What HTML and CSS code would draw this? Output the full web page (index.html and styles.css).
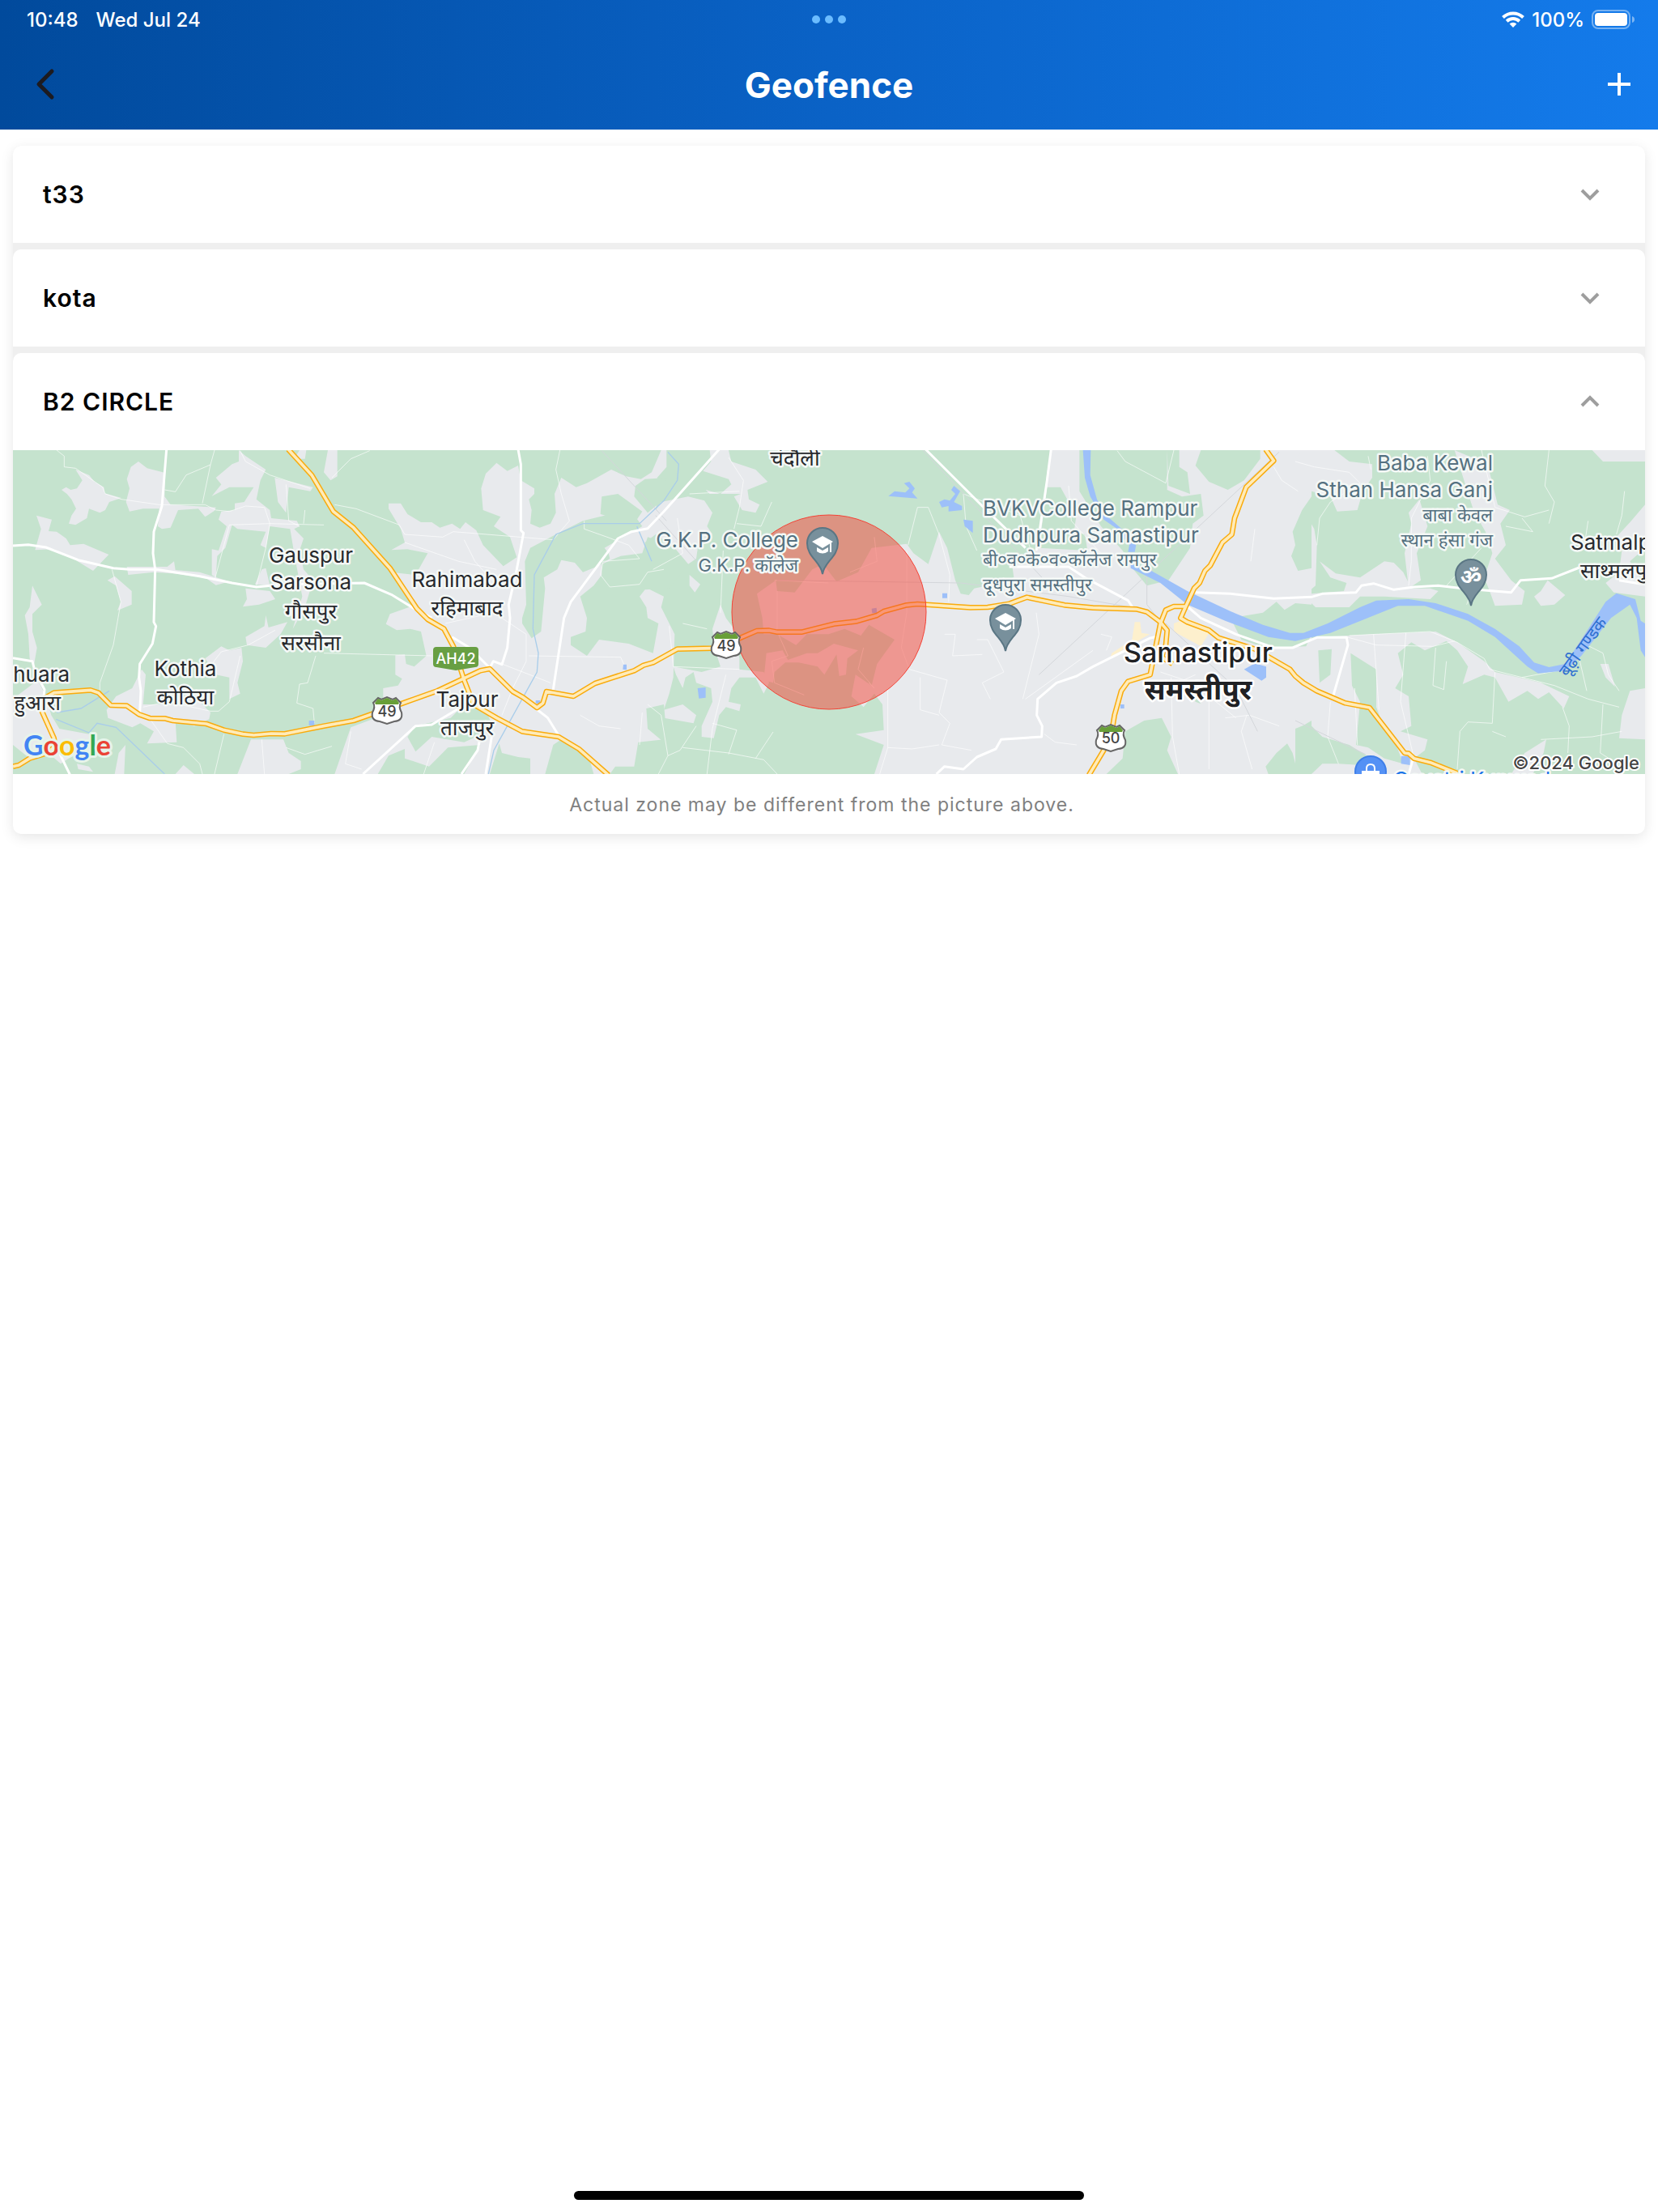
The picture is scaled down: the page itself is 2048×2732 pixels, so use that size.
FILE: index.html
```html
<!DOCTYPE html>
<html lang="en">
<head>
<meta charset="utf-8">
<meta name="viewport" content="width=device-width, initial-scale=1">
<title>Geofence</title>
<link rel="stylesheet" href="styles.css">
</head>
<body>
<header class="top">
  <div class="status">
    <div class="status-side status-start"><span>10:48</span><span>Wed Jul 24</span></div>
    <div class="dots"><i></i><i></i><i></i></div>
    <div class="status-side status-end">
      <svg class="wifi" viewBox="0 0 28 20" aria-hidden="true"><path d="M1.5 7.5a18 18 0 0 1 25 0M6.2 12.2a11.4 11.4 0 0 1 15.6 0" fill="none" stroke="#fff" stroke-width="4"/><path d="M14 20l-4.4-4.4a6.3 6.3 0 0 1 8.8 0z" fill="#fff"/></svg>
      <span>100%</span>
      <svg class="battery" viewBox="0 0 54 24" aria-hidden="true"><rect x="1" y="1" width="46" height="22" rx="7" fill="none" stroke="#fff" stroke-opacity=".42" stroke-width="2"/><rect x="4" y="4" width="40" height="16" rx="4" fill="#fff"/><path d="M50 8q3 1 3 4t-3 4z" fill="#fff" fill-opacity=".45"/></svg>
    </div>
  </div>
  <nav class="bar">
    <button class="icon-button icon-start" type="button" aria-label="Back"><svg width="24" height="40" viewBox="0 0 24 40" aria-hidden="true"><path d="M20 4L4 20l16 16" fill="none" stroke="#1d1b20" stroke-width="5" stroke-linecap="round" stroke-linejoin="round"/></svg></button>
    <h1>Geofence</h1>
    <button class="icon-button icon-end" type="button" aria-label="Add geofence"><svg width="28" height="28" viewBox="0 0 28 28" aria-hidden="true"><path d="M14 0v28M0 14h28" stroke="#fff" stroke-width="4"/></svg></button>
  </nav>
</header>
<main>
  <div class="zones">
    <section class="zone">
      <h2><button type="button" aria-expanded="false">t33<svg class="chevron" viewBox="0 0 24 16" aria-hidden="true"><path d="M2 3l10 10L22 3"/></svg></button></h2>
    </section>
    <section class="zone">
      <h2><button type="button" aria-expanded="false">kota<svg class="chevron" viewBox="0 0 24 16" aria-hidden="true"><path d="M2 3l10 10L22 3"/></svg></button></h2>
    </section>
    <section class="zone">
      <h2><button type="button" aria-expanded="true">B2 CIRCLE<svg class="chevron" viewBox="0 0 24 16" aria-hidden="true"><path d="M2 13L12 3l10 10"/></svg></button></h2>
      <svg class="map" viewBox="0 0 2016 400" role="img" aria-label="Map of the B2 CIRCLE zone near Samastipur">
        <defs>
          <g id="shield"><path d="M-11-15L-7-13 0-16 7-13 11-15 17-9Q14-4 18 3 20 13 9 14L0 17-9 14Q-20 13-18 3-14-4-17-9z" fill="#fff" stroke="#666" stroke-width="2"/><path d="M-11-14L-7-12 0-15 7-12 11-14 15-9 14-7H-14L-15-9z" fill="#689f38"/></g>
          <g id="pin"><path d="M0 37C-2 22-19 16-19-1a19 19 0 0 1 38 0C19 16 2 22 0 37z" fill="#78909c" stroke="#5a7684" stroke-width="2"/></g>
          <g id="hat"><path d="M-13-4L0-11 13-4 0 4zM-7 3L0 7 7 3V8Q0 13-7 8zM9-3h2V9H9z" fill="#fff"/></g>
          <path id="nh-west" d="M48 1190L70 1185 110 1160 175 1140 205 1115 200 1085 155 985 160 940 200 917 335 907 365 917 410 963 470 965 515 997 555 1011 610 1012 640 1020 765 1032 830 1055 900 1070 940 1074 1005 1068 1055 1069 1200 1040 1310 1020 1480 960 1620 910 1780 835 1815 828 1900 912 1940 935 1990 972 2012 955 2025 912 2125 930 2205 882 2350 835 2385 815 2420 805 2510 755 2640 752 2740 715 2805 687 2850 686 2880 692 2970 692 3090 662 3175 652 3250 630 3275 615 3360 592 3400 588 3595 601 3660 600 3740 587 3805 563 3945 592 4050 602 4210 607 4250 617 4300 655 4325 685 4320 740 4305 785 4345 810"/>
          <path id="ah42" d="M1068 15L1155 110 1235 245 1310 305 1445 455 1545 605 1585 645 1645 680 1680 745 1720 870 1755 960 1840 1010 1935 1060 2070 1080 2145 1125 2255 1222"/>
          <path id="nh-east" d="M4690 15L4720 57 4618 155 4575 270 4565 330 4530 360 4485 445 4465 465 4445 510 4425 530 4395 595 4375 640 4400 655 4480 685 4515 713 4650 755 4780 830 4800 855 4830 880 4880 910 4985 955 5075 972 5205 1140 5220 1142 5240 1160 5300 1175 5400 1215"/>
          <path id="nh-south" d="M4395 597L4350 597 4320 610 4300 660 4280 760 4262 850 4180 875 4155 910 4130 1000 4120 1060 4090 1130 4035 1222"/>
        </defs>
        <rect width="2016" height="400" fill="#c5e3ce"/>
        <g transform="translate(-16 -6) scale(.333333)">
          <g fill="#e8eaed">
            <path d="M228 165L245 155 262 165 285 160 305 130 280 90 330 110 350 135 385 155 388 178 450 195 405 210 390 240 370 250 330 235 322 270 280 295 255 290 265 260 282 235 265 200 248 180zM470 125L485 80 513 60 545 85 612 102 610 190 632 220 800 230 795 242 760 265 735 235 660 240 632 305 600 310 585 300 590 235 530 235 480 245 467 210 480 160zM135 260L192 275 180 318 210 320 245 345 260 370 310 365 403 405 345 465 280 425 200 385 130 388 152 310zM470 450L620 450 645 430 650 462 740 470 850 505 800 518 760 490 640 475 570 470 475 480zM398 500L425 485 488 540 488 590 435 612 448 580 430 520zM120 520L155 590 120 625 120 690 137 750 125 820 110 790 105 700 92 630 110 600zM48 940L140 870 170 930 190 1000 220 1050 330 1070 370 1115 330 1130 270 1150 225 1180 190 1150 110 1160 48 1110zM395 980L430 930 490 900 525 830 540 850 530 960 640 960 720 930 780 990 775 1015 720 1040 650 1020 655 1100 545 1105 570 1060 520 1030 490 1045 400 1010z"/>
            <path d="M785 188L820 145 800 120 860 70 885 60 885 18 910 40 985 90 965 130 950 200 1000 240 1005 270 1100 280 1110 300 1090 310 1125 345 1110 390 1125 460 1160 500 1130 600 1085 680 1120 560 1090 400 1075 310 1000 300 985 380 965 370 985 320 880 310 860 295 835 380 805 410 800 490 785 480 785 385 810 390 840 300 810 275 820 245 870 240 870 215 905 210 940 155 850 155zM1018 120L1160 155 1150 170 1070 155 1060 250 1030 210zM1090 50L1110 18 1135 18 1130 50zM910 530L1000 540 1020 570 960 590 900 598 915 570zM945 515L970 460 985 455 1000 520zM910 710L980 670 985 630 995 675 1065 655 1040 700 985 750 915 740zM760 790L820 745 850 760 895 750 900 800 880 880 890 920 850 940 850 860 800 850zM930 1090L1050 1090 1070 1140 1115 1170 1115 1200 1070 1218 880 1218zM465 1110L460 1218 425 1218 440 1140zM1200 100L1215 18 1250 18 1250 115 1225 130zM285 1180L330 1190 345 1210 290 1200zM650 1218L680 1185 720 1218z"/>
            <path d="M1240 1218L1300 1045 1420 1000 1420 900 1475 890 1490 865 1465 850 1465 778 1500 775 1505 810 1535 820 1580 780 1560 690 1520 680 1470 685 1430 662 1445 625 1530 595 1450 470 1540 480 1585 400 1510 385 1450 388 1500 360 1485 310 1440 235 1440 215 1485 215 1510 255 1560 285 1600 285 1630 305 1675 290 1705 310 1725 285 1765 315 1790 370 1865 448 1915 415 1890 340 1830 300 1855 265 1790 240 1783 160 1800 105 1840 65 1880 95 1920 75 1930 130 1980 160 1980 180 1960 200 1970 240 1965 290 2000 305 2040 290 2060 250 2055 180 2080 120 2135 155 2175 140 2265 90 2320 115 2375 125 2415 100 2450 18 2470 18 2470 80 2435 120 2440 165 2430 240 2450 210 2550 190 2610 205 2640 250 2620 300 2640 330 2590 350 2580 420 2550 440 2495 375 2430 330 2390 360 2400 530 2460 560 2450 600 2500 700 2495 860 2480 920 2460 980 2530 960 2580 1000 2570 1030 2460 1010 2400 1000 2400 1050 2460 1100 2450 1120 2400 1100 2380 1218z"/>
            <path d="M2605 95L2635 60 2630 18 2700 18 2710 60 2800 90 2845 135 2770 165 2775 200 2815 220 2800 250 2750 240 2720 190 2745 180 2630 180 2615 165 2670 180 2710 145 2700 125zM2555 480L2595 515 2575 545 2555 520zM2495 820L2600 840 2670 820 2650 760 2640 680 2670 590 2690 640 2720 680 2740 790 2740 830 2830 840 2850 880 2830 920 2800 860 2740 860 2710 900 2700 950 2745 960 2740 985 2690 970 2665 1000 2645 1085 2600 1080 2600 1040 2640 950 2635 900 2580 880 2570 840 2540 860 2530 900 2505 850zM2805 550L2875 500 2880 540 2945 545 3010 460 3050 440 3100 505 3180 470 3230 380 3360 365 3385 400 3440 440 3480 320 3510 380 3540 500 3560 550 3590 555 3610 530 3660 520 3660 18 4860 18 4860 1218 3240 1218 3275 1110 3170 1070 3275 1055 3270 960 3240 920 3200 970 3155 930 3170 850 3230 890 3250 810 3315 720 3220 665 3190 705 3130 680 3070 700 2990 700 2950 740 2880 700 2830 700 2825 640zM2840 770L2900 760 2920 795 2990 770 3030 770 3090 735 3180 760 3140 790 3135 850 3110 855 3100 775 3055 850 3030 820 2960 805 2910 805 2870 840 2865 880 2830 870z"/>
            <path d="M4800 50L4830 18 4945 18 5000 60 5085 70 5085 120 5050 170 5030 240 4955 245 4930 190 4860 170 4800 220zM4800 220L4830 240 4870 310 4880 370 4875 520 4840 550 4855 440 4800 370zM4890 430L4950 475 5040 490 5130 430 5165 435 5200 470 5230 530 5300 530 5330 540 5300 570 5130 560 5040 560 5000 600 4875 600 4850 575 4800 580 4800 550 4860 550 4980 540 4990 510 4930 490zM5205 400L5230 290 5220 250 5260 200 5290 300 5250 400 5265 500 5220 530zM5390 18L5490 60 5520 100 5550 220 5595 240 5560 290 5580 370 5540 420 5600 500 5650 540 5640 590 5540 595 5520 540 5500 490 5530 400 5510 330 5460 240zM5685 560L5710 540 5735 500 5800 555 5760 590 5710 595zM5900 18L6096 18 6096 60 5940 60zM6010 390L5990 340 6045 280 6096 220 6096 380 6040 430 6096 520 6096 560 5980 545 5950 510 6000 470z"/>
            <path d="M4790 750L4880 710 5000 705 5090 700 5210 695 5320 690 5400 730 5500 800 5540 840 5630 860 5710 880 5815 930 5795 975 5740 915 5700 940 5660 910 5590 950 5540 860 5500 850 5420 885 5440 820 5400 760 5360 725 5280 760 5230 730 5180 770 5200 850 5170 900 5220 930 5230 1040 5190 1060 5290 1090 5280 1130 5240 1160 5270 1218 4790 1218zM6040 910L6096 900 6096 1090 6000 1085 6010 1000zM5930 810L5960 810 5985 895 5950 860zM5650 1140L5730 1090 5720 1140 5680 1218 5600 1218z"/>
          </g>
          <g fill="#c5e3ce">
            <path d="M1935 640L1950 590 1945 430 1965 380 2060 330 2160 280 2240 260 2355 265 2380 300 2310 340 2240 380 2255 400 2260 420 2210 450 2160 470 2130 435 2080 425 2065 460 2015 490 2020 530 2005 690 1970 715 1935 660zM2355 150L2390 125 2470 120 2460 200 2400 250 2350 190zM2230 190L2290 180 2380 245 2350 290 2225 255zM2230 440L2300 410 2380 400 2400 340 2460 360 2495 375 2550 440 2480 530 2390 535 2370 560 2395 600 2400 640 2440 660 2420 770 2330 735 2220 720 2175 780 2115 740 2115 710 2170 690 2175 640 2150 560 2200 520 2230 480zM2395 975L2460 960 2470 1070 2400 1050zM2365 1100L2460 1090 2460 1190 2400 1218 2260 1218 2280 1190 2350 1190zM2050 1110L2080 1090 2185 1165 2200 1218 2020 1218zM1850 1105L1860 1140 1920 1155 1965 1160 1965 1218 1815 1218zM1510 1080L1540 1040 1670 1010 1720 960 1800 980 1830 1050 1720 1100 1600 1080 1540 1135zM1400 1218L1440 1150 1500 1125 1500 1160 1590 1190 1660 1120 1780 1110 1720 1218z"/>
            <path d="M3600 18L3895 18 3880 100 3865 260 3830 420 3750 440 3760 510 3600 515zM3880 155L3930 155 3960 210 3990 250 3980 320 4020 330 4030 390 3850 380zM4000 18L4325 18 4325 165 4380 190 4450 180 4460 260 4420 290 4410 380 4330 500 4250 520 4200 460 4160 390 4080 300 4000 170zM4450 18L4670 18 4670 50 4610 130 4550 165 4480 135 4430 75zM4325 18L4370 18 4370 80 4400 100 4410 180 4330 150zM4860 190L4825 240 4790 320 4800 370 4785 410 4810 465 4860 455zM4560 640L4680 620 4730 580 4760 610 4800 585 4860 590 4860 700 4840 745 4690 750 4600 720zM4170 1060L4240 1020 4305 1010 4340 1080 4325 1130 4365 1218 4100 1218 4160 1160zM4690 1190L4730 1140 4770 1105 4790 1140 4810 1218 4700 1218zM4810 1050L4860 1020 4860 1110 4830 1100zM4420 920L4450 958 4430 950z"/>
            <path d="M5005 770L5100 830 5100 970 5130 1050 5170 1100 5200 1180 5130 1160 5070 1120 5025 1110 5040 950 5010 890zM4885 760L4935 755 4930 850 4890 880zM4800 1050L4850 1030 4900 1080 5000 1110 5130 1190 4960 1180 4900 1180 4860 1218 4800 1218z"/>
          </g>
          <path fill="#fdf0cd" d="M4205 655L4225 655 4230 695 4260 700 4190 740 4115 785 4120 770 4195 720zM4350 660L4400 640 4490 680 4450 745 4350 690z"/>
          <g class="lane">
            <path d="M210 18L238 40 238 80 280 85 380 155 390 180 450 200 590 220 760 220 800 240 850 245 910 225 980 230 1000 290 1200 295M610 165L650 172 690 110 780 72 750 215M795 18L780 72M985 380L1000 290 850 295 795 500M985 380L950 520M415 460L448 580 420 740 370 880 370 910M530 970L620 950 780 985 810 985 850 950 890 780M920 740L820 765 770 830M920 740L1020 685M1060 145L1070 280 1110 300M1130 240L1125 290M890 20L910 60 1000 110 1150 160M1170 780L1140 880 1110 885 1100 955 1160 975 1165 1030M830 1070L795 1218M560 1020L620 1105 680 1120 740 1180 750 1218M1060 1120L1130 1145 1230 1115M970 1090L980 1218"/>
            <path d="M1240 220L1320 235 1480 295 1500 330 1640 340 1680 320 2050 350 2110 280 2080 180 2060 90 2075 18M1230 120L1300 50 1370 20M1500 360L1700 430 1840 460M1720 350L1760 430 1850 530M2165 280L2165 310 2250 340M2250 340L2330 370 2370 420 2235 430 2225 480 2260 525 2370 515 2400 470 2460 460M1650 660L1830 620 1950 700 1950 800 1900 900 1860 1000M1860 810L2040 880M1960 780L2300 785 2320 830M1600 780L1200 770M2150 1000L2220 1040 2300 1050M1300 1060L1280 1180 1340 1200M1610 1100L1570 1218M2380 990L2370 1110M2700 45L2755 130 2740 230 2720 310M2510 270L2530 400 2420 460M2555 180L2740 170M2860 210L2820 300 2730 290M2680 390L2670 620M2480 670L2495 820 2740 830M2530 660L2620 680M2880 540L2880 690 2920 780 2860 800 2870 880 2980 925M2690 850L2640 1050 2620 1218M2640 1030L2730 1055 2700 1145M2530 1120L2700 1140 2830 1165 2880 1218M2800 1160L2865 1062M2400 960L2450 1000 2475 1150 2440 1218M2475 1150L2520 1130 2580 1040"/>
            <path d="M3365 370L3400 230 3440 230 3480 330 3520 480 3515 580M3360 390L3360 620 3340 750 3370 830 3510 870 3480 990 3520 1030 3490 1110 3600 1130M3290 900L3290 1120 3260 1218M3410 860L3410 980 3480 1000M3500 700L3540 700 3530 780 3640 775M3240 340L3250 430 3150 470M2870 500L3070 510M3200 750L3180 830 3240 900 3220 880M3290 1120L3380 1125 3480 1110M3570 180L3780 260 3820 390M3570 180L3580 300 3620 390M4350 18L4320 140 4170 60 4140 20M3960 150L3970 280 4080 400M3840 620L3850 700 3790 940M3620 720L3660 720 3720 840 3640 880 3670 940M3800 940L4050 760M4080 700L4120 710 4100 760M4340 860L4345 1080 4370 1218M4480 950L4480 1200M4540 1010L4630 1000 4740 1040M4620 1000L4600 1060 4640 1200M4650 310L4635 430M4720 80L4750 130 4810 170M3870 1070L3910 1100 3990 1110M4300 840L4420 880 4580 1010M4320 900L4430 850"/>
            <path d="M4800 60L4870 80 5000 100 5040 140 4930 210 4890 270 4880 370M5070 40L5080 90M5290 40L5300 130 5230 270 5230 430 5220 520M5540 230L5650 265 5740 240M5580 300L5680 320 5640 270M5740 18L5725 150 5760 210 5740 290M5885 280L5870 380M6020 170L6010 260 5990 330M5490 18L5540 230M5490 380L5360 520M5460 530L5435 590M4990 710L5100 740 5310 745 5390 725M5090 700L5110 980M5210 695L5190 950 5240 1160M5000 705L5300 690 5400 730 5500 790 5520 830 5640 860 5800 830 5880 740 5940 770 5960 850 6000 910M5640 860L5760 890 5885 940 6000 970M5320 750L5310 890 5350 905 5360 800M5540 840L5530 1030 5440 1025 5410 1060 5400 1200M5530 1060L5580 1080M5790 970L5815 1040 5810 1140M5710 1090L5900 1080 6010 1060M5940 960L5930 1140 6010 1190M5850 780L5880 910M4930 950L4920 1080 4960 1180M5020 900L5030 1110"/>
          </g>
          <path d="M3420 18L3880 510M2430 260L2600 450M2880 500L3560 510 3960 560 4190 600M4740 25L3850 850M2230 20L2470 280M4320 660L4580 900 4660 1060M4800 1020L5060 1145M4250 440L4250 590 4320 680" fill="none" stroke="#d3d6da" stroke-width="3"/>
          <g fill="none" stroke="#a9cdea" stroke-width="4">
            <path d="M210 990L300 975 405 910M208 1015L330 1065 360 1030 430 1045 610 1218M2475 25L2515 70 2510 130 2460 205 2370 290 2160 290 2060 330 1980 480 1975 680 1995 770 1990 840 1830 1130 1810 1218M2360 300L2415 430"/>
          </g>
          <g fill="#9dc0f9">
            <path d="M4013 18L4042 18 4040 110 4065 200 4100 260 4180 330 4210 370 4205 395 4180 395 4185 370 4140 310 4090 275 4040 190 4020 120zM4190 440L4240 450 4400 540 4560 615 4680 665 4780 695 4830 695 4920 660 5040 600 5100 575 5220 570 5320 585 5440 625 5540 680 5630 745 5685 805 5740 822 5800 810 5860 720 5950 580 5990 548 6060 570 6080 650 6096 660 6096 785 6080 760 6065 640 6040 590 5970 640 5860 780 5800 835 5700 845 5660 820 5540 710 5440 650 5280 595 5180 595 4930 695 4800 725 4700 710 4540 650 4400 590 4300 510 4190 455z"/>
            <path d="M3292 188L3315 170 3355 175 3370 160 3350 140 3370 135 3390 160 3380 175 3400 197zM3480 210L3500 200 3520 205 3540 180 3525 165 3535 150 3558 170 3535 210 3565 225 3565 240 3515 245 3515 225 3490 230zM3570 275L3605 280 3605 325 3575 300zM2585 900L2615 897 2615 935 2590 938zM1145 1020H1165V1038H1145zM2310 812L2322 812 2322 832 2308 830zM1985 945L2002 945 2002 962 1985 955zM3492 548H3510V566H3492zM4610 830L4650 808 4692 820 4692 860 4675 872zM4152 960H4166V975H4152zM5192 1152L5225 1150 5225 1185 5192 1180zM3230 605L3248 602 3250 622 3232 622z"/>
          </g>
          <g class="street">
            <path d="M617 15L600 225 570 320 567 400 575 460 570 655 578 670 565 735 518 810 515 860 522 910 518 995M48 372L105 368 170 378 290 425 420 455 480 460 580 460 740 485 860 510 950 525 1050 515 1350 510 1450 553 1540 608 1600 640M48 788L120 800 130 840 165 905 160 950M220 1140L260 1222M1920 15L1930 70 1930 315 1940 325 1915 460 1885 590 1890 640 1880 750 1860 812 1828 800 1815 825M1675 710L1740 750 1815 825M1345 1218L1540 1040 1600 1035 1700 975M1780 1080L1770 1130 1710 1218M1825 1060L1800 1218M1985 975L2030 1010 2070 1075M2050 905L2090 640 2115 580 2290 345 2340 320 2400 308 2460 245 2665 15M3895 15L3880 130 3855 300 3840 390M3740 450L3960 450 4020 490 4180 575 4200 605M4290 708L4260 715 4050 820 3990 855 3915 880 3845 940 3842 1000 3862 1040 3860 1080 3710 1090 3690 1125 3620 1155 3570 1200 3500 1190 3470 1218M3430 15L3640 225 3800 380M4430 545L4560 550 4720 568 4860 562 4900 550 5025 545 5045 520 5090 512 5165 535 5240 525 5330 520 5420 530 5600 545 5635 500 5750 493 5860 450M6000 500L6060 510 6096 515M4400 597L4450 640 4580 700 4720 750 4790 750 4880 712 4990 712 4995 740 4940 930M5235 1165L5220 1220"/>
          </g>
          <g class="road-edge"><use href="#ah42"/><use href="#nh-west"/><use href="#nh-south"/><use href="#nh-east"/></g>
          <g class="road-fill"><use href="#ah42"/><use href="#nh-west"/><use href="#nh-south"/><use href="#nh-east"/></g>
        </g>
        <circle cx="1008" cy="200" r="120" fill="#f44336" fill-opacity=".5" stroke="#f44336" stroke-width="1"/>
        <use href="#shield" x="462" y="321"/>
        <use href="#shield" x="881" y="240"/>
        <use href="#shield" x="1356" y="355"/>
        <path d="M523 243h48q4 0 4 4v17q0 4-4 4l-24 4-24-4q-4 0-4-4v-17q0-4 4-4z" fill="#689f43"/>
        <use href="#pin" x="1000" y="116"/><use href="#hat" x="1000" y="117"/>
        <use href="#pin" x="1226" y="211"/><use href="#hat" x="1226" y="212"/>
        <use href="#pin" x="1801" y="155"/>
        <circle cx="1677" cy="397" r="19" fill="#5491f5" stroke="#3f7fe8" stroke-width="2"/>
        <path d="M1666 396h22v8h-22z" fill="#fff"/><path d="M1672 397v-4q0-5 5-5t5 5v4" fill="none" stroke="#fff" stroke-width="2"/>
        <g class="shield-text"><text x="462" y="329">49</text><text x="881" y="248">49</text><text x="1356" y="362">50</text><text class="ah" x="547" y="264">AH42</text></g>
        <text class="om" x="1801" y="165">ॐ</text>
        <g class="place mid">
          <text x="368" y="139">Gauspur</text><text x="368" y="172">Sarsona</text><text x="368" y="208">गौसपुर</text><text x="368" y="247">सरसौना</text>
          <text x="561" y="169">Rahimabad</text><text x="561" y="204">रहिमाबाद</text>
          <text x="561" y="317">Tajpur</text><text x="561" y="352">ताजपुर</text>
          <text x="213" y="279">Kothia</text><text x="213" y="314">कोठिया</text>
          <text x="966" y="19">चंदौली</text>
        </g>
        <g class="place end"><text x="70" y="286">huara</text><text x="59" y="321">हुआरा</text></g>
        <g class="place"><text x="1924" y="123">Satmalpur</text><text x="1936" y="158">साथ्मलपुर</text></g>
        <g class="city mid"><text x="1464" y="262">Samastipur</text><text class="city-local" x="1464" y="308">समस्तीपुर</text></g>
        <g class="poi end">
          <text x="970" y="120">G.K.P. College</text><text class="local" x="970" y="150">G.K.P. कॉलेज</text>
          <text x="1828" y="25">Baba Kewal</text><text x="1828" y="58">Sthan Hansa Ganj</text><text class="local" x="1828" y="88">बाबा केवल</text><text class="local" x="1828" y="119">स्थान हंसा गंज</text>
        </g>
        <g class="poi">
          <text x="1198" y="81">BVKVCollege Rampur</text><text x="1198" y="114">Dudhpura Samastipur</text><text class="local" x="1198" y="143">बी०व०के०व०कॉलेज रामपुर</text><text class="local" x="1198" y="174">दूधपुरा समस्तीपुर</text>
        </g>
        <text class="poi shop" x="1705" y="416">Gayatri Kunwad</text>
        <text class="river mid" transform="translate(1945 247) rotate(-54)">बूढ़ी गण्डक</text>
        <text class="credit" x="2009" y="394">©2024 Google</text>
        <text class="logo" x="13" y="377"><tspan fill="#4285f4">G</tspan><tspan fill="#ea4335">o</tspan><tspan fill="#fbbc04">o</tspan><tspan fill="#4285f4">g</tspan><tspan fill="#34a853">l</tspan><tspan fill="#ea4335">e</tspan></text>
      </svg>
      <p class="note">Actual zone may be different from the picture above.</p>
    </section>
  </div>
</main>
<footer class="home"><span></span></footer>
</body>
</html>
```
FILE: styles.css
```css
* { box-sizing: border-box; }
body {
  margin: 0;
  min-height: 100vh;
  display: flex;
  flex-direction: column;
  background: #fff;
  color: #000;
  font-family: Inter, "Noto Sans", sans-serif;
}
button { font: inherit; color: inherit; background: none; border: 0; padding: 0; cursor: pointer; }
svg { display: block; }

.top { background: linear-gradient(to right, #014a9c, #0a62c6 50%, #147beb); color: #fff; }
.status {
  display: grid;
  grid-template-columns: 1fr auto 1fr;
  align-items: center;
  height: 48px;
  padding: 0 28px;
  font-size: 24px;
  font-weight: 500;
}
.status-side { display: flex; align-items: center; }
.status-start { gap: 22px; padding-left: 5px; }
.status-end { justify-content: flex-end; gap: 9px; }
.wifi { width: 28px; height: 20px; }
.battery { width: 54px; height: 24px; }
.dots { display: flex; gap: 6px; }
.dots i { width: 10px; height: 10px; border-radius: 50%; background: #6bbcff; }
.bar {
  display: grid;
  grid-template-columns: 1fr auto 1fr;
  align-items: center;
  height: 112px;
  padding: 0 34px;
}
.bar h1 { margin: 0; padding-top: 2px; font-size: 44px; line-height: 56px; font-weight: 700; }
.icon-button { justify-self: start; }
.icon-start { padding-left: 10px; }
.icon-end { justify-self: end; }

main { flex: 1; padding: 20px 16px; }
.zones {
  display: flex;
  flex-direction: column;
  gap: 8px;
  border-radius: 10px;
  background: #efefef;
  box-shadow: 0 4px 16px rgba(0, 0, 0, .1);
}
.zone { background: #fff; border-radius: 10px 10px 0 0; }
.zone:last-child { border-radius: 10px; }
.zone h2 { margin: 0; font-size: 30px; font-weight: 600; letter-spacing: 1px; }
.zone h2 button {
  display: flex;
  align-items: center;
  justify-content: space-between;
  width: 100%;
  height: 120px;
  padding: 0 56px 0 37px;
  letter-spacing: inherit;
}
.chevron { width: 24px; height: 16px; fill: none; stroke: #9e9e9e; stroke-width: 4; }
.note { margin: 0; padding: 22px 18px 20px 0; font-size: 23px; line-height: 32px; letter-spacing: 1px; text-align: center; color: #808080; }

.map { width: 100%; height: auto; overflow: hidden; }
.map text { paint-order: stroke; stroke-linejoin: round; }
.lane { fill: none; stroke: #fff; stroke-opacity: .65; stroke-width: 3; }
.street { fill: none; stroke: #fff; stroke-width: 9; stroke-linejoin: round; }
.road-edge, .road-fill { fill: none; stroke-linejoin: round; }
.road-edge { stroke: #f9ab0c; stroke-width: 20; }
.road-fill { stroke: #ffebb8; stroke-width: 11; }
.place, .poi { font-size: 26px; stroke: #f4f8f6; stroke-width: 5px; fill: #27292d; }
.poi { fill: #557180; }
.poi .local { font-size: 22px; }
.poi.shop { fill: #1a73e8; }
.city { font-size: 34px; font-weight: 500; fill: #202124; stroke: #fff; stroke-width: 5px; }
.city-local { font-size: 35px; font-weight: 700; }
.mid { text-anchor: middle; }
.end { text-anchor: end; }
.shield-text { font-size: 18px; font-weight: 500; text-anchor: middle; fill: #444; }
.ah { fill: #fff; }
.om { font-size: 26px; font-weight: 700; text-anchor: middle; fill: #fff; }
.river { font-size: 21px; fill: #2f6fd0; }
.credit { font-size: 22px; font-weight: 500; text-anchor: end; fill: #444; stroke: #fff; stroke-width: 4px; }
.logo { font-family: Lato, sans-serif; font-size: 34px; font-weight: 700; stroke: #e6f4ea; stroke-width: 6px; }

.home { display: flex; justify-content: center; padding-bottom: 15px; }
.home span { width: 630px; max-width: 60%; height: 11px; border-radius: 6px; background: #000; }
```
